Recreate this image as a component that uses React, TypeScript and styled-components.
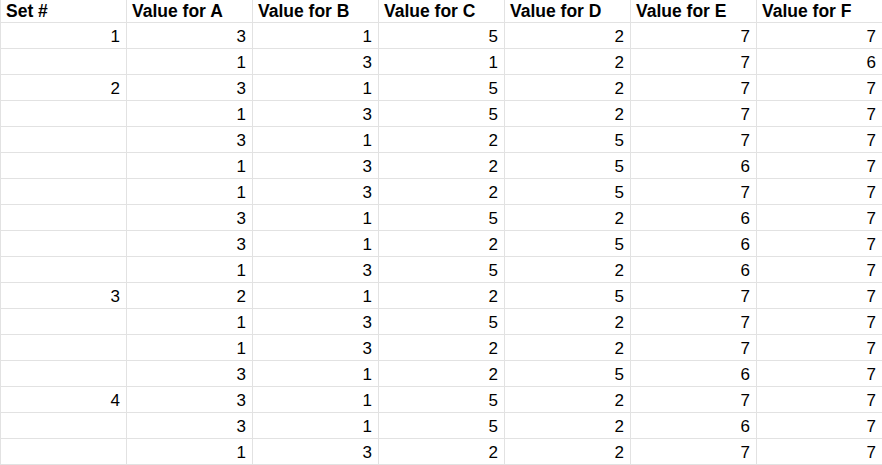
import React from "react";
import styled, { createGlobalStyle } from "styled-components";

const Global = createGlobalStyle`
  html, body { margin: 0; padding: 0; background: #fff; overflow: hidden; }
  body { font-family: "Liberation Sans", Arial, sans-serif; color: #000; }
`;

const Sheet = styled.table`
  border-collapse: collapse;
  table-layout: fixed;
  width: 883px;
  border-left: 1px solid #e2e2e2;
`;

const Col = styled.col`
  width: 126px;
`;

const HeadCell = styled.th`
  height: 22px;
  padding: 0 5px;
  text-align: left;
  font-size: 17.5px;
  font-weight: 700;
  border-right: 1px solid #e2e2e2;
  border-bottom: 1px solid #e2e2e2;
  white-space: nowrap;
  overflow: hidden;
  line-height: 22px;
`;

const Cell = styled.td`
  height: 25px;
  padding: 2px 6px 0 6px;
  text-align: right;
  font-size: 17px;
  border-right: 1px solid #e2e2e2;
  border-bottom: 1px solid #e2e2e2;
  line-height: 23px;
  box-sizing: border-box;
`;

const headers = ["Set #", "Value for A", "Value for B", "Value for C", "Value for D", "Value for E", "Value for F"];

const rows: (number | "")[][] = [
  [1, 3, 1, 5, 2, 7, 7],
  ["", 1, 3, 1, 2, 7, 6],
  [2, 3, 1, 5, 2, 7, 7],
  ["", 1, 3, 5, 2, 7, 7],
  ["", 3, 1, 2, 5, 7, 7],
  ["", 1, 3, 2, 5, 6, 7],
  ["", 1, 3, 2, 5, 7, 7],
  ["", 3, 1, 5, 2, 6, 7],
  ["", 3, 1, 2, 5, 6, 7],
  ["", 1, 3, 5, 2, 6, 7],
  [3, 2, 1, 2, 5, 7, 7],
  ["", 1, 3, 5, 2, 7, 7],
  ["", 1, 3, 2, 2, 7, 7],
  ["", 3, 1, 2, 5, 6, 7],
  [4, 3, 1, 5, 2, 7, 7],
  ["", 3, 1, 5, 2, 6, 7],
  ["", 1, 3, 2, 2, 7, 7],
];

export default function App() {
  return (
    <>
      <Global />
      <Sheet>
        <colgroup>
          {headers.map((h) => (
            <Col key={h} />
          ))}
        </colgroup>
        <thead>
          <tr>
            {headers.map((h) => (
              <HeadCell key={h}>{h}</HeadCell>
            ))}
          </tr>
        </thead>
        <tbody>
          {rows.map((r, i) => (
            <tr key={i}>
              {r.map((v, j) => (
                <Cell key={j}>{v}</Cell>
              ))}
            </tr>
          ))}
        </tbody>
      </Sheet>
    </>
  );
}
